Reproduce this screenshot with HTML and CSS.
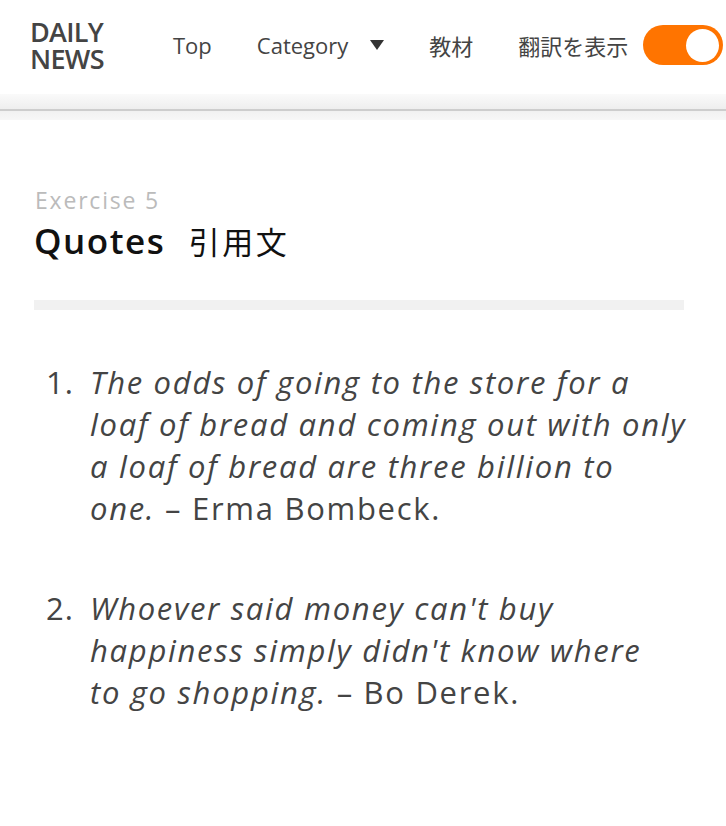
FILE: index.html
```html
<!DOCTYPE html>
<html lang="ja">
<head>
<meta charset="utf-8">
<title>Daily News - Quotes</title>
<link rel="stylesheet" href="styles.css">
</head>
<body>
<header class="topbar">
  <div class="logo">DAILY<br>NEWS</div>
  <nav class="nav">
    <a class="nav-link">Top</a>
    <a class="nav-link dropdown">Category <span class="caret"></span></a>
    <a class="nav-link">教材</a>
    <span class="nav-label">翻訳を表示</span>
    <span class="toggle"><span class="knob"></span></span>
  </nav>
</header>
<div class="shade"></div>
<div class="shade-under"></div>
<main class="content">
  <div class="eyebrow">Exercise 5</div>
  <h1 class="title">Quotes <span class="title-ja">引用文</span></h1>
  <div class="divider"></div>
  <ol class="quotes">
    <li><span class="quote-body"><em>The odds of going to the store for a loaf of bread and coming out with only a loaf of bread are three billion to</em> <span class="nb"><em>one.</em> – Erma</span> Bombeck.</span></li>
    <li><span class="quote-body"><em>Whoever said money can't buy happiness simply didn't know where</em> <span class="nb"><em>to go shopping.</em></span> – Bo Derek.</span></li>
  </ol>
</main>
</body>
</html>
```
FILE: styles.css
```css
html, body {
  margin: 0;
  padding: 0;
  background: #fff;
}
body {
  font-family: "Open Sans", "Noto Sans CJK JP", sans-serif;
  color: #444;
}
.topbar {
  height: 94px;
  display: flex;
  align-items: center;
  padding-left: 30px;
  background: #fff;
  box-sizing: border-box;
}
.logo {
  font-size: 27px;
  font-weight: 600;
  line-height: 27px;
  color: #444;
  letter-spacing: -0.7px;
  width: 76px;
  margin-top: -5px;
}
.nav {
  display: flex;
  align-items: center;
  margin-left: 67px;
  font-size: 22px;
  margin-top: -4px;
}
.nav-link {
  color: #444;
  text-decoration: none;
  margin-right: 45px;
  display: flex;
  align-items: center;
}
.dropdown .caret {
  display: inline-block;
  width: 0;
  height: 0;
  border-left: 7.5px solid transparent;
  border-right: 7.5px solid transparent;
  border-top: 10px solid #333;
  margin-left: 22px;
}
.nav-label {
  color: #444;
  margin-right: 15px;
}
.toggle {
  width: 80px;
  height: 40px;
  border-radius: 20px;
  background: #ff7400;
  display: flex;
  align-items: center;
  justify-content: flex-end;
  padding-right: 4px;
  box-sizing: border-box;
}
.knob {
  width: 33px;
  height: 33px;
  border-radius: 50%;
  background: #fff;
}
.shade {
  height: 15px;
  background: linear-gradient(#fafafa, #eeeeee);
  border-bottom: 2px solid #cdcdcd;
}
.shade-under {
  height: 9px;
  background: linear-gradient(#f1f1f1, #f7f7f7);
}
.content {
  padding: 65px 42px 0 34px;
}
.eyebrow {
  font-size: 23px;
  color: #bbb;
  letter-spacing: 1.8px;
  line-height: 30px;
  padding-left: 1px;
}
.title {
  margin: 3px 0 0;
  font-size: 35px;
  font-weight: 600;
  color: #111;
  letter-spacing: 1.5px;
  line-height: 46px;
}
.title-ja {
  font-weight: 400;
  font-size: 31px;
  letter-spacing: 2.5px;
  margin-left: 13px;
}
.divider {
  height: 10px;
  background: #f1f1f1;
  margin-top: 35px;
}
.quotes {
  list-style: none;
  counter-reset: item;
  margin: 51px -8px 0 0;
  padding: 0;
  font-size: 31px;
  line-height: 42px;
  letter-spacing: 1.7px;
  color: #444;
}
.quotes li {
  counter-increment: item;
  display: flex;
  margin-bottom: 58px;
}
.quotes li::before {
  content: counter(item) ".";
  flex: 0 0 40px;
  text-align: right;
  margin-right: 16px;
  letter-spacing: 1px;
}
.quote-body {
  flex: 1;
}
.quotes em {
  font-style: italic;
}
.nb {
  white-space: nowrap;
}
```
